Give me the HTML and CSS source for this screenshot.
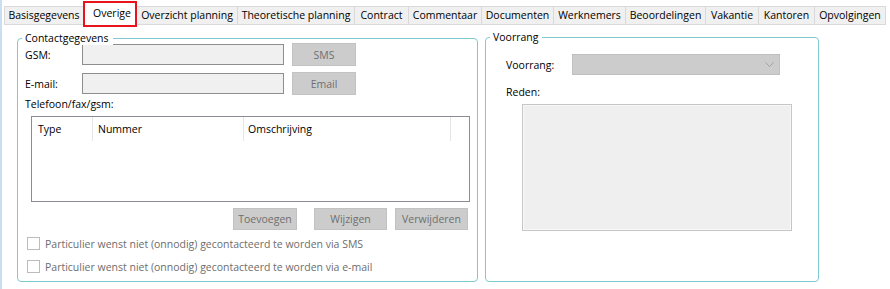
FILE: index.html
```html
<!DOCTYPE html>
<html lang="nl">
<head>
<meta charset="utf-8">
<title>Overige</title>
<link rel="stylesheet" href="styles.css">
</head>
<body>
<div class="app">
  <div class="tabs">
    <div class="tab w-basis">Basisgegevens</div>
    <div class="tab sel">Overige</div>
    <div class="tab w-ovp">Overzicht planning</div>
    <div class="tab w-theo">Theoretische planning</div>
    <div class="tab w-contract">Contract</div>
    <div class="tab w-comm">Commentaar</div>
    <div class="tab w-doc">Documenten</div>
    <div class="tab w-werk">Werknemers</div>
    <div class="tab w-beo">Beoordelingen</div>
    <div class="tab w-vak">Vakantie</div>
    <div class="tab w-kan">Kantoren</div>
    <div class="tab w-opv last">Opvolgingen</div>
  </div>
  <div class="content">
    <div class="group contact">
      <span class="legend">Contactgegevens</span>
      <div class="row">
        <span class="lbl">GSM:</span>
        <span class="input"></span>
        <span class="btn btn-side">SMS</span>
      </div>
      <div class="row row2">
        <span class="lbl">E-mail:</span>
        <span class="input"></span>
        <span class="btn btn-side">Email</span>
      </div>
      <div class="lbl-line">Telefoon/fax/gsm:</div>
      <div class="list">
        <div class="list-head">
          <span class="col c1">Type</span>
          <span class="col c2">Nummer</span>
          <span class="col c3">Omschrijving</span>
          <span class="col c4"></span>
        </div>
      </div>
      <div class="actions">
        <span class="btn b-add">Toevoegen</span>
        <span class="btn b-edit">Wijzigen</span>
        <span class="btn b-del">Verwijderen</span>
      </div>
      <div class="check first"><span class="box"></span><span>Particulier wenst niet (onnodig) gecontacteerd te worden via SMS</span></div>
      <div class="check second"><span class="box"></span><span>Particulier wenst niet (onnodig) gecontacteerd te worden via e-mail</span></div>
    </div>
    <div class="group prio">
      <span class="legend">Voorrang</span>
      <div class="prow">
        <span class="plbl">Voorrang:</span>
        <span class="combo">
          <svg class="chev" width="9" height="5" viewBox="0 0 9 5"><polyline points="0.5,0.5 4.5,4.5 8.5,0.5" fill="none" stroke="#a3a3a3" stroke-width="1"/></svg>
        </span>
      </div>
      <div class="reden">Reden:</div>
      <div class="memo"></div>
    </div>
  </div>
</div>
</body>
</html>
```
FILE: styles.css
```css
html, body {
  margin: 0;
  padding: 0;
  background: #ffffff;
}
body {
  font-family: "Open Sans", "Noto Sans", sans-serif;
  font-size: 10.5px;
  line-height: 14px;
  color: #000;
}
.app {
  height: 289px;
  box-sizing: border-box;
  border-left: 2px solid #c9ddf5;
  padding-left: 2px;
}

/* tabs */
.tabs {
  display: flex;
  align-items: flex-start;
  height: 27px;
}
.tab {
  margin-top: 6px;
  height: 19px;
  box-sizing: border-box;
  border: 1px solid #d9d9d9;
  border-right: none;
  background: #f0f0f0;
  line-height: 17px;
  text-align: center;
  white-space: nowrap;
}
.tab.last { border-right: 1px solid #d9d9d9; }
.tab.sel {
  margin-top: 1px;
  height: 26px;
  width: 54px;
  border: 2px solid #e8141c;
  background: #ffffff;
  padding-top: 2px;
  padding-left: 4px;
}
.w-basis { width: 79px; }
.w-ovp { width: 100px; border-left: none; }
.w-theo { width: 117px; }
.w-contract { width: 54px; }
.w-comm { width: 73px; }
.w-doc { width: 72px; }
.w-werk { width: 72px; }
.w-beo { width: 80px; }
.w-vak { width: 53px; }
.w-kan { width: 56px; }
.w-opv { width: 72px; }

/* content */
.content {
  display: flex;
  align-items: flex-start;
  gap: 7px;
  padding: 10px 0 0 13px;
}
.group {
  position: relative;
  box-sizing: border-box;
  border: 1px solid #80c9d1;
  border-radius: 4px;
}
.legend {
  position: absolute;
  top: -8px;
  left: 4px;
  padding: 0 4px 0 3px;
  background: #ffffff;
  line-height: 14px;
  white-space: nowrap;
}
.contact {
  width: 461px;
  height: 244px;
  margin-top: 1px;
  padding: 4px 0 0 7px;
  display: flex;
  flex-direction: column;
}
.row {
  display: flex;
  align-items: center;
  height: 23px;
}
.row2 { margin-top: 6px; }
.lbl { width: 57px; }
.input {
  width: 202px;
  height: 21px;
  box-sizing: border-box;
  border: 1px solid #8e8e8e;
  background: #f0f0f0;
}
.btn {
  display: flex;
  align-items: center;
  justify-content: center;
  box-sizing: border-box;
  background: #cccccc;
  border: 1px solid #c2c2c2;
  color: #6f6f6f;
  white-space: nowrap;
}
.btn-side {
  margin-left: 8px;
  width: 64px;
  height: 23px;
}
.lbl-line {
  margin-top: 2px;
  height: 14px;
}
.list {
  margin: 5px 7px 0 6px;
  height: 86px;
  box-sizing: border-box;
  border: 1px solid #8a8d93;
  background: #fff;
}
.list-head {
  display: flex;
  height: 24px;
}
.col {
  box-sizing: border-box;
  height: 24px;
  line-height: 24px;
  border-right: 1px solid #e5e5e5;
  white-space: nowrap;
}
.c1 { width: 61px; padding-left: 6px; }
.c2 { width: 151px; padding-left: 5px; }
.c3 { width: 207px; padding-left: 4px; }
.c4 { flex: 1; border-right: none; }
.actions {
  display: flex;
  justify-content: flex-end;
  margin: 6px 9px 0 0;
  height: 22px;
}
.actions .btn { height: 22px; }
.b-add { width: 64px; }
.b-edit { width: 73px; margin-left: 17px; }
.b-del { width: 73px; margin-left: 8px; }
.check {
  display: flex;
  align-items: center;
  height: 17px;
  padding-left: 2px;
  color: #6d6d6d;
  white-space: nowrap;
}
.check.first { margin-top: 5px; }
.check.second { margin-top: 6px; }
.box {
  width: 13px;
  height: 13px;
  box-sizing: border-box;
  border: 1px solid #bcbcbc;
  background: #fff;
  margin-right: 5px;
}

/* right group */
.prio {
  width: 334px;
  height: 245px;
  padding: 16px 0 0 20px;
}
.prow {
  display: flex;
  align-items: center;
  height: 21px;
}
.plbl { width: 66px; }
.combo {
  position: relative;
  width: 208px;
  height: 21px;
  box-sizing: border-box;
  border: 1px solid #c0c0c0;
  background: #cccccc;
  display: flex;
  align-items: center;
  justify-content: flex-end;
  padding-right: 5px;
}
.chev { display: block; }
.reden {
  margin-top: 10px;
  height: 14px;
}
.memo {
  margin: 5px 0 0 16px;
  width: 270px;
  height: 127px;
  box-sizing: border-box;
  border: 1px solid #c6c6c6;
  box-shadow: inset 0 0 0 1px #f8f8f8;
  background: #efefef;
}
```
